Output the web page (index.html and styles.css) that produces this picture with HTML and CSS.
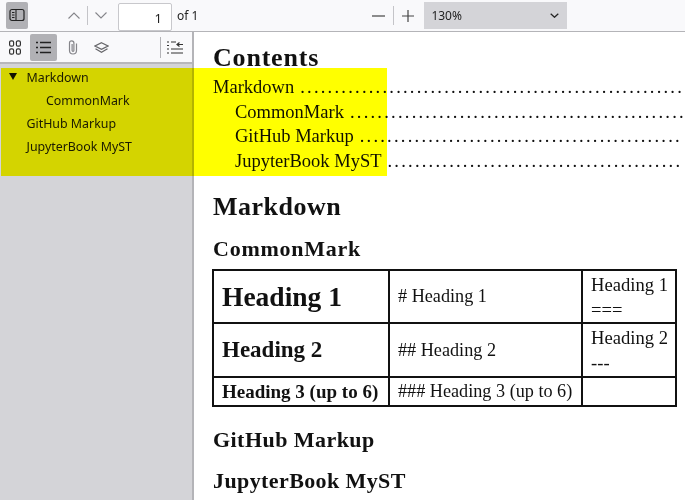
FILE: index.html
```html
<!DOCTYPE html>
<html lang="en">
<head>
<meta charset="utf-8">
<title>PDF viewer</title>
<link rel="stylesheet" href="styles.css">
</head>
<body>
<div class="app">
  <header class="toolbar">
    <button class="tool toggle" aria-label="Sidebar"><svg width="16" height="14" viewBox="0 0 16 14"><rect x="1" y="1.500" width="14" height="11" rx="2" fill="none" stroke="#222" stroke-width="1.200"/><path d="M7 2v10M3 4.500h2.500M3 7h2.500M3 9.500h2.500" stroke="#222" stroke-width="1.100" fill="none"/></svg></button>
    <div class="pager">
      <svg class="ic" width="12" height="7" viewBox="0 0 12 7"><path d="M.5 6.500 6 1l5.500 5.500" fill="none" stroke="#85858a" stroke-width="1.100"/></svg>
      <span class="sep"></span>
      <svg class="ic" width="12" height="7" viewBox="0 0 12 7"><path d="M.5.500 6 6l5.500-5.500" fill="none" stroke="#85858a" stroke-width="1.100"/></svg>
    </div>
    <div class="page-input">1</div>
    <span class="of">of 1</span>
    <div class="zoom">
      <svg class="ic" width="13" height="2" viewBox="0 0 13 2"><path d="M0 1h13" stroke="#444" stroke-width="1.200"/></svg>
      <span class="sep"></span>
      <svg class="ic" width="12" height="12" viewBox="0 0 12 12"><path d="M0 6h12M6 0v12" stroke="#444" stroke-width="1.200"/></svg>
    </div>
    <div class="zoom-select"><span>130%</span><svg width="9" height="5" viewBox="0 0 9 5"><path d="M.7.700 4.500 4.300 8.300.700" fill="none" stroke="#222" stroke-width="1.200"/></svg></div>
  </header>
  <div class="body">
    <aside class="sidebar">
      <div class="side-tools">
        <button class="stool" aria-label="Thumbnails"><svg width="12" height="15" viewBox="0 0 12 15"><g fill="none" stroke="#333" stroke-width="1.200"><rect x=".6" y=".8" width="4" height="5.400" rx="1.500"/><rect x="7.400" y=".8" width="4" height="5.400" rx="1.500"/><rect x=".6" y="8.800" width="4" height="5.400" rx="1.500"/><rect x="7.400" y="8.800" width="4" height="5.400" rx="1.500"/></g></svg></button>
        <button class="stool active" aria-label="Outline"><svg width="15" height="13" viewBox="0 0 15 13"><path d="M0 1.500h2M4 1.500h11M0 6.500h2M4 6.500h11M0 11.500h2M4 11.500h11" stroke="#222" stroke-width="1.300"/></svg></button>
        <button class="stool" aria-label="Attachments"><svg width="10" height="15" viewBox="0 0 10 15"><path d="M8.500 3.500v7a3.500 3.500 0 0 1-7 0V3a2.200 2.200 0 0 1 4.400 0v7.500a.9.9 0 0 1-1.800 0V4" fill="none" stroke="#85858a" stroke-width="1.200"/></svg></button>
        <button class="stool" aria-label="Layers"><svg width="15" height="11" viewBox="0 0 15 11"><path d="M7.500.7 14 4 7.500 7.300 1 4zM1.500 6.800l6 3.500 6-3.500" fill="none" stroke="#66666a" stroke-width="1.200"/></svg></button>
        <span class="side-sep"></span>
        <button class="stool" aria-label="Collapse"><svg width="16" height="13" viewBox="0 0 16 13"><path d="M0 1h2M4 1h5M0 4.500h2M0 8h2M4 8h12M0 12h2M4 12h12" stroke="#333" stroke-width="1.200"/><path d="M16 3.500H10M12.500 1.500l-2.500 2 2.500 2" fill="none" stroke="#333" stroke-width="1.200"/></svg></button>
      </div>
      <ul class="outline">
        <li class="item"><span class="arrow"></span>Markdown</li>
        <li class="item sub">CommonMark</li>
        <li class="item">GitHub Markup</li>
        <li class="item">JupyterBook MyST</li>
      </ul>
    </aside>
    <main class="doc">
      <h1 class="contents">Contents</h1>
      <div class="toc">
        <div class="toc-row"><span>Markdown</span><span class="dots">........................................................</span></div>
        <div class="toc-row sub"><span>CommonMark</span><span class="dots">.................................................</span></div>
        <div class="toc-row sub"><span>GitHub Markup</span><span class="dots">...............................................</span></div>
        <div class="toc-row sub"><span>JupyterBook MyST</span><span class="dots">...........................................</span></div>
      </div>
      <h2 class="h-md">Markdown</h2>
      <h3 class="h-cm">CommonMark</h3>
      <table class="tbl">
        <colgroup><col class="c1"><col class="c2"><col class="c3"></colgroup>
        <tr class="r1"><th class="t1">Heading 1</th><td># Heading 1</td><td class="stack">Heading 1<br>===</td></tr>
        <tr class="r2"><th class="t2">Heading 2</th><td>## Heading 2</td><td class="stack">Heading 2<br>---</td></tr>
        <tr class="r3"><th class="t3">Heading 3 (up to 6)</th><td>### Heading 3 (up to 6)</td><td></td></tr>
      </table>
      <h3 class="h-gh">GitHub Markup</h3>
      <h3 class="h-jb">JupyterBook MyST</h3>
    </main>
  </div>
  <div class="highlight"></div>
</div>
</body>
</html>
```
FILE: styles.css
```css
* { box-sizing: border-box; }
html, body { margin: 0; height: 100%; overflow: hidden; }
.app { position: relative; width: 685px; height: 500px; overflow: hidden; background: #fff; font-family: "Noto Sans", sans-serif; }
button { border: 0; background: none; padding: 0; display: flex; align-items: center; justify-content: center; }

.toolbar { height: 32px; background: #f9f9fb; border-bottom: 1px solid #b4b4b8; display: flex; align-items: center; padding-left: 6px; }
.tool { width: 22px; height: 27px; border-radius: 2px; margin-top: -1px; }
.toggle { background: #b1b1b5; }
.pager { display: flex; align-items: center; margin-left: 40px; gap: 7px; }
.sep { width: 1px; height: 19px; background: #c4c4c8; }
.page-input { width: 54px; height: 28px; margin-left: 11px; margin-top: 2px; background: #fff; border: 1px solid #c8c8cc; border-radius: 2px; font-size: 13px; line-height: 28px; text-align: right; padding-right: 9px; color: #222; }
.of { font-size: 12px; margin-left: 5px; color: #222; }
.zoom { display: flex; align-items: center; margin-left: 174px; gap: 8px; }
.zoom-select { width: 143px; height: 27px; margin-left: 10px; margin-top: -1px; background: #d4d4d8; display: flex; align-items: center; justify-content: space-between; padding: 0 8px 0 7px; font-size: 12px; color: #222; }

.body { display: flex; height: 468px; }
.sidebar { width: 194px; flex: none; background: #d4d4d8; border-right: 2px solid #b4b4b8; }
.side-tools { height: 32px; background: #f9f9fb; border-bottom: 2px solid #b8b8bc; display: flex; align-items: center; padding-left: 1px; }
.stool { width: 27px; height: 27px; border-radius: 2px; }
.stool.active { background: #b1b1b5; }
.stool + .stool { margin-left: 2px; }
.side-sep { width: 1px; height: 21px; background: #b4b4b8; margin-left: 45px; }
.outline { list-style: none; margin: 0; padding: 2px 0 0 26.500px; font-size: 12.400px; color: #1a1a1a; }
.item { height: 23px; line-height: 23px; position: relative; }
.item.sub { padding-left: 19.500px; }
.arrow { position: absolute; left: -18px; top: 7px; width: 0; height: 0; border: 4px solid transparent; border-top: 7px solid #111; border-bottom: 0; }

.doc { flex: 1; padding: 0 0 0 19px; overflow: hidden; font-family: "Liberation Serif", serif; color: #111; }
.contents { font-size: 26px; line-height: 28px; font-weight: 700; letter-spacing: .8px; margin: 12px 0 0; }
.toc { font-size: 18.500px; line-height: 24.500px; margin-top: 3px; }
.toc-row { display: flex; gap: 6px; white-space: nowrap; }
.toc-row.sub { padding-left: 22px; }
.dots { letter-spacing: 2.230px; }
.h-md { font-size: 26px; line-height: 28px; font-weight: 700; letter-spacing: .5px; margin: 20px 0 0; }
.h-cm { font-size: 22px; line-height: 24px; font-weight: 700; letter-spacing: .75px; margin: 16px 0 0; }
.tbl { border-collapse: collapse; table-layout: fixed; width: 464px; margin: 8px 0 0 -1px; }
.c1 { width: 176px; } .c2 { width: 193px; } .c3 { width: 94px; }
.tbl th, .tbl td { border: 2px solid #111; padding: 0 8px; text-align: left; font-weight: 400; font-size: 18px; white-space: nowrap; }
.tbl td { font-size: 18.200px; }
.tbl td.stack { font-size: 18.600px; line-height: 25px; vertical-align: top; padding-top: 1px; }
.tbl th { font-weight: 700; }
.r1 { height: 53px; } .r2 { height: 54px; } .r3 { height: 29px; }
.t1 { font-size: 27.500px !important; }
.t2 { font-size: 23px !important; }
.t3 { font-size: 19px !important; }
.h-gh { font-size: 22px; line-height: 24px; font-weight: 700; letter-spacing: .45px; margin: 21px 0 0; }
.h-jb { font-size: 22px; line-height: 24px; font-weight: 700; letter-spacing: .4px; margin: 17px 0 0; }

.highlight { position: absolute; left: 1px; top: 68px; width: 386px; height: 108px; background: #ff0; mix-blend-mode: multiply; }
```
